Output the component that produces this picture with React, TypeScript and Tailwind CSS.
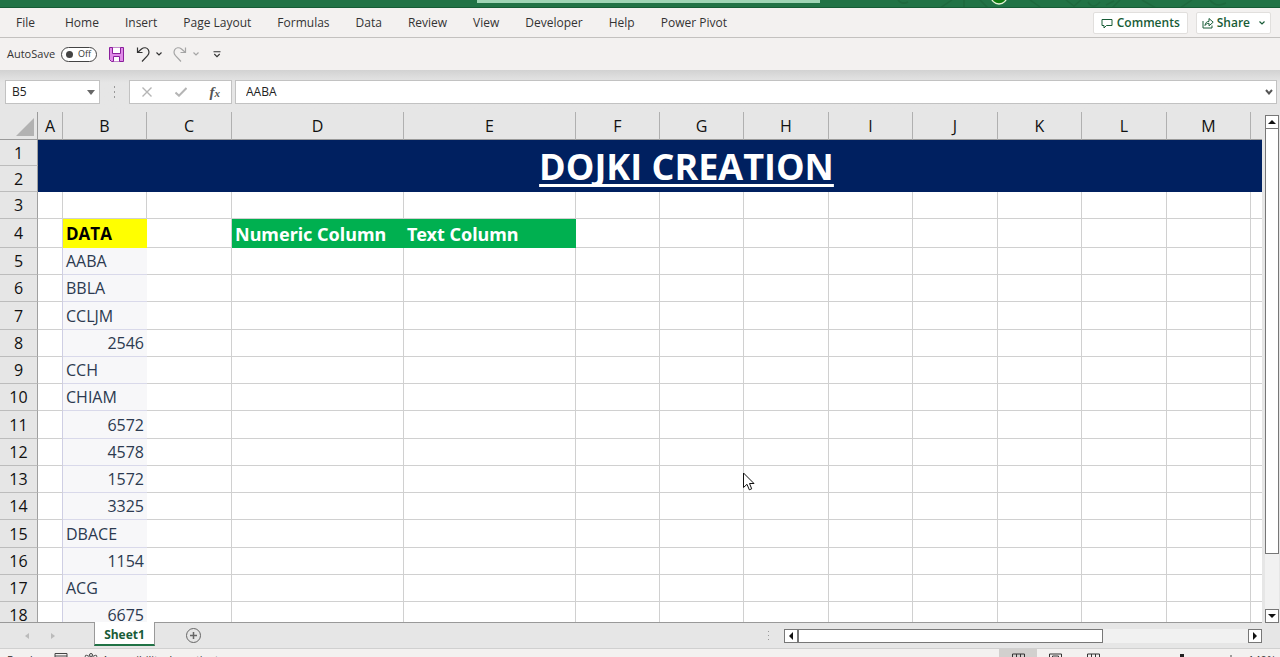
import { useState } from 'react'

interface Row {
  id: number
  height: string
  value?: string | number
}

const COLUMNS = [
  { id: 'A', width: 'w-[25px]' },
  { id: 'B', width: 'w-[84px]' },
  { id: 'C', width: 'w-[85px]' },
  { id: 'D', width: 'w-[172px]' },
  { id: 'E', width: 'w-[172px]' },
  { id: 'F', width: 'w-[84px]' },
  { id: 'G', width: 'w-[84px]' },
  { id: 'H', width: 'w-[85px]' },
  { id: 'I', width: 'w-[84px]' },
  { id: 'J', width: 'w-[85px]' },
  { id: 'K', width: 'w-[84px]' },
  { id: 'L', width: 'w-[85px]' },
  { id: 'M', width: 'w-[84px]' },
  { id: '', width: 'w-[84px]' },
]

const DATA_ROWS: Row[] = [
  { id: 5, height: 'h-[27px]', value: 'AABA' },
  { id: 6, height: 'h-[27px]', value: 'BBLA' },
  { id: 7, height: 'h-[28px]', value: 'CCLJM' },
  { id: 8, height: 'h-[27px]', value: 2546 },
  { id: 9, height: 'h-[27px]', value: 'CCH' },
  { id: 10, height: 'h-[27px]', value: 'CHIAM' },
  { id: 11, height: 'h-[28px]', value: 6572 },
  { id: 12, height: 'h-[27px]', value: 4578 },
  { id: 13, height: 'h-[27px]', value: 1572 },
  { id: 14, height: 'h-[27px]', value: 3325 },
  { id: 15, height: 'h-[28px]', value: 'DBACE' },
  { id: 16, height: 'h-[27px]', value: 1154 },
  { id: 17, height: 'h-[27px]', value: 'ACG' },
  { id: 18, height: 'h-[27px]', value: 6675 },
]

const MENU = [
  'Home',
  'Insert',
  'Page Layout',
  'Formulas',
  'Data',
  'Review',
  'View',
  'Developer',
  'Help',
  'Power Pivot',
]

function Chevron({ className }: { className: string }) {
  return (
    <svg viewBox="0 0 6 4" className={className} fill="none" stroke="currentColor" strokeWidth="1.2">
      <path d="M0.5 0.5 L3 3 L5.5 0.5" />
    </svg>
  )
}

function TitleBar() {
  return (
    <div className="relative flex h-2 shrink-0 justify-center overflow-hidden border-b border-[#155c35] bg-[#217346]">
      <div className="ml-4 h-[3px] w-[343px] bg-[#9fd5b5]" />
      <svg className="absolute right-0 top-0 h-2 w-[400px]" viewBox="0 0 400 8" fill="none">
        <g stroke="#1e693e" strokeWidth="1.5">
          <path d="M18 0 q4 5 10 2 M60 8 L72 0 M84 0 V8 M108 8 L100 0 M150 0 l10 7 M186 0 l8 6 l7 -6 M208 2 q5 8 12 0 M226 5 l8 -4 M240 0 l-8 8 M262 0 L276 8 M300 8 L312 0 M330 0 q6 8 16 3" />
        </g>
        <circle cx="119" cy="-4" r="8" fill="#107c10" stroke="#e8f5d8" strokeWidth="1.3" />
      </svg>
    </div>
  )
}

function MenuBar() {
  return (
    <div className="flex h-[30px] shrink-0 items-center border-b border-[#c3c1bf] bg-[#f3f1f0] pl-4 pr-[9px] pt-px text-[12px] text-[#333]">
      <nav className="flex gap-[26px]">
        <button className="mr-1">File</button>
        {MENU.map((item) => (
          <button key={item} className="whitespace-nowrap">
            {item}
          </button>
        ))}
      </nav>
      <div className="ml-auto flex gap-2 font-semibold text-[#185c37]">
        <button className="flex h-[22px] items-center gap-1 rounded-xs border border-[#e1dfdd] bg-white px-[7px]">
          <svg viewBox="0 0 12 11" className="h-[11px] w-3" fill="none" stroke="currentColor">
            <path d="M1 1.5 H11 V7.5 H5.5 L3 10 V7.5 H1 Z" />
          </svg>
          Comments
        </button>
        <button className="flex h-[22px] items-center gap-[3px] rounded-xs border border-[#e1dfdd] bg-white px-[5px]">
          <svg viewBox="0 0 12 12" className="size-3" fill="none" stroke="currentColor">
            <path d="M1 4 V11 H10 V8.5" />
            <path d="M3 8.5 C3.3 5.8 4.8 4.5 7 4.3 V1.5 L11.2 5.2 L7 8.8 V6.3 C5.2 6.3 4 7 3 8.5 Z" />
          </svg>
          Share
          <Chevron className="ml-1.5 h-1 w-1.5" />
        </button>
      </div>
    </div>
  )
}

function QuickAccess() {
  const [autoSave, setAutoSave] = useState(false)

  return (
    <div className="flex h-8 shrink-0 items-center bg-[#f3f1f0] pl-[7px] text-[11px] text-[#333]">
      <span id="autosave">AutoSave</span>
      <button
        role="switch"
        aria-checked={autoSave}
        aria-labelledby="autosave"
        onClick={() => setAutoSave(!autoSave)}
        className="ml-1.5 flex h-[15px] w-9 items-center justify-between rounded-full border border-[#444] bg-white pl-1 pr-[5px] text-[9px]"
      >
        <span className="size-[7px] rounded-full bg-[#444]" />
        {autoSave ? 'On' : 'Off'}
      </button>
      <button aria-label="Save" className="ml-3">
        <svg viewBox="0 0 15 15" className="size-[15px]" fill="none" stroke="#8a1f9c">
          <path d="M0.5 0.5 H14.5 V14.5 H2.5 L0.5 12.5 Z" fill="#e08be8" />
          <path d="M3.5 0.5 V6.5 H11.5 V0.5" fill="#fff" />
          <path d="M4.5 14.5 V9.5 H10.5 V14.5" fill="#fff" />
        </svg>
      </button>
      <button aria-label="Undo" className="ml-3 flex items-center gap-1.5">
        <svg viewBox="0 0 14 15" className="h-[15px] w-3.5" fill="none" stroke="#333" strokeWidth="1.2">
          <path d="M1.5 0.5 V5.5 H6.5" />
          <path d="M1.5 5.5 L5.5 2 C8 0 11 0.5 12.3 2.7 C13.5 5 13 7 11.5 8.7 L6 14.5" />
        </svg>
        <Chevron className="h-1 w-1.5" />
      </button>
      <button aria-label="Redo" className="ml-[11px] flex items-center gap-1.5 text-[#a5a5a5]">
        <svg viewBox="0 0 14 15" className="h-[15px] w-3.5" fill="none" stroke="currentColor" strokeWidth="1.2">
          <path d="M12.5 0.5 V5.5 H7.5" />
          <path d="M12.5 5.5 L8.5 2 C6 0 3 0.5 1.7 2.7 C0.5 5 1 7 2.5 8.7 L8 14.5" />
        </svg>
        <Chevron className="h-1 w-1.5" />
      </button>
      <button aria-label="Customize" className="ml-3.5">
        <svg viewBox="0 0 8 7" className="h-[7px] w-2" fill="none" stroke="#333" strokeWidth="1.1">
          <path d="M0.5 0.8 H7.5 M1.3 3 L4 5.7 L6.7 3" />
        </svg>
      </button>
    </div>
  )
}

function FormulaBar() {
  return (
    <div className="flex shrink-0 bg-linear-to-b from-[#d2d2d2] to-[#e6e6e6] to-30% pb-2 pl-[5px] pr-[3px] pt-2.5 text-[12px] text-[#222]">
      <div className="flex h-6 w-[95px] items-center border border-[#c2c2c2] bg-white pl-1.5 pr-1">
        <input aria-label="Name box" defaultValue="B5" className="w-full min-w-0 outline-none" />
        <svg viewBox="0 0 8 5" className="h-[5px] w-2 shrink-0" fill="#666">
          <path d="M0 0 H8 L4 5 Z" />
        </svg>
      </div>
      <svg viewBox="0 0 2 12" className="ml-3.5 mr-[13px] h-3 w-0.5 self-center" fill="#999">
        <path d="M0 0h1v2h-1z M0 5h1v2h-1z M0 10h1v2h-1z" />
      </svg>
      <div className="flex h-6 w-[103px] items-center justify-between border border-[#c2c2c2] bg-white pl-3 pr-[11px]">
        <button aria-label="Cancel">
          <svg viewBox="0 0 10 10" className="size-2.5" stroke="#b5b5b5" strokeWidth="1.4">
            <path d="M0.5 0.5 L9.5 9.5 M9.5 0.5 L0.5 9.5" />
          </svg>
        </button>
        <button aria-label="Enter">
          <svg viewBox="0 0 12 10" className="h-2.5 w-3" fill="none" stroke="#b5b5b5" strokeWidth="2">
            <path d="M0.5 5.5 L4 8.7 L11.5 1" />
          </svg>
        </button>
        <button aria-label="Insert function" className="font-['Liberation_Serif',serif] text-[15px] font-bold italic leading-4 text-[#555]">
          f<span className="text-[11px]">x</span>
        </button>
      </div>
      <div className="ml-[3px] flex h-6 flex-1 items-center border border-[#c2c2c2] bg-white pl-2.5 pr-[3px]">
        <input aria-label="Formula bar" defaultValue="AABA" className="min-w-0 flex-1 outline-none" />
        <button aria-label="Expand formula bar">
          <svg viewBox="0 0 8 6" className="h-1.5 w-2" fill="none" stroke="#555" strokeWidth="2">
            <path d="M1 1 L4 4.5 L7 1" />
          </svg>
        </button>
      </div>
    </div>
  )
}

const ROW_HEADER = 'border-b border-r border-b-[#bcbcbc] border-r-[#a0a0a0] bg-[#e6e6e6] p-0 font-normal leading-5 text-[#111]'
const CELL = 'border-b border-r border-[#d0d0d0] p-0'

function Sheet() {
  return (
    <table className="w-max table-fixed border-separate border-spacing-0 bg-white text-[16px]">
      <colgroup>
        <col className="w-[38px]" />
        {COLUMNS.map((col, i) => (
          <col key={i} className={col.width} />
        ))}
      </colgroup>
      <thead>
        <tr className="h-7">
          <td className="border-b border-r border-[#9a9a9a] bg-[#e6e6e6] p-0 align-bottom">
            <svg viewBox="0 0 18 18" className="mb-[3px] ml-auto mr-[3px] block size-[18px]" fill="#b2b2b2">
              <path d="M18 0 V18 H0 Z" />
            </svg>
          </td>
          {COLUMNS.map((col, i) => (
            <th
              key={i}
              scope="col"
              className="border-b border-r border-b-[#9a9a9a] border-r-[#b0b0b0] bg-[#e6e6e6] p-0 font-normal leading-6 text-[#111]"
            >
              {col.id}
            </th>
          ))}
        </tr>
      </thead>
      <tbody>
        <tr className="h-[26px]">
          <th scope="row" className={ROW_HEADER}>1</th>
          <td
            colSpan={14}
            rowSpan={2}
            className="bg-[#002060] p-0 pt-0.5 text-center text-[36px] font-bold leading-[50px] text-white underline decoration-[3px] underline-offset-4 [text-decoration-skip-ink:none]"
          >
            DOJKI CREATION
          </td>
        </tr>
        <tr className="h-[26px]">
          <th scope="row" className={ROW_HEADER}>2</th>
        </tr>
        <tr className="h-[27px]">
          <th scope="row" className={ROW_HEADER}>3</th>
          {COLUMNS.map((col, i) => (
            <td key={i} className={CELL} />
          ))}
        </tr>
        <tr className="h-[29px] text-left text-[18px] font-bold leading-6">
          <th scope="row" className={`${ROW_HEADER} text-center text-[16px]`}>4</th>
          <td className={CELL} />
          <td className="bg-[#ffff00] p-0 pl-[3px] text-[17px] text-black">DATA</td>
          <td className={CELL} />
          <td className="whitespace-nowrap bg-[#00b050] p-0 pl-[3px] font-['Noto_Sans',sans-serif] text-white">Numeric Column</td>
          <td className="whitespace-nowrap bg-[#00b050] p-0 pl-[3px] font-['Noto_Sans',sans-serif] text-white">Text Column</td>
          {COLUMNS.slice(5).map((col, i) => (
            <td key={i} className={CELL} />
          ))}
        </tr>
        {DATA_ROWS.map((row) => (
          <tr key={row.id} className={row.height}>
            <th scope="row" className={ROW_HEADER}>{row.id}</th>
            <td className="border-b border-r border-b-[#d0d0d0] border-r-[#cfcfe4] p-0" />
            <td
              className={`border-b border-[#d9d9ea] bg-[#f7f7f9] px-[3px] py-0 leading-5 text-[#2c3a50] ${
                typeof row.value === 'number' ? 'text-right' : 'text-left'
              }`}
            >
              {row.value}
            </td>
            {COLUMNS.slice(2).map((col, i) => (
              <td key={i} className={CELL} />
            ))}
          </tr>
        ))}
      </tbody>
    </table>
  )
}

function ScrollButton({ label, path }: { label: string; path: string }) {
  return (
    <button aria-label={label} className="flex size-3.5 shrink-0 items-center justify-center border border-[#777] bg-white">
      <svg viewBox="0 0 8 8" className="size-2" fill="#111">
        <path d={path} />
      </svg>
    </button>
  )
}

function SheetTabs() {
  return (
    <div className="flex h-[26px] shrink-0 border-b border-[#d0d0d0] bg-[#e6e6e6]">
      <div className="flex w-[94px] items-center gap-[22px] pl-[25px] text-[#bbb]">
        <button aria-label="Previous sheet">
          <svg viewBox="0 0 4 6" className="h-1.5 w-1" fill="currentColor">
            <path d="M4 0 V6 L0 3 Z" />
          </svg>
        </button>
        <button aria-label="Next sheet">
          <svg viewBox="0 0 4 6" className="h-1.5 w-1" fill="currentColor">
            <path d="M0 0 V6 L4 3 Z" />
          </svg>
        </button>
      </div>
      <button className="-mt-px h-6 w-[61px] border-x border-b-2 border-x-[#999] border-b-[#217346] bg-white pt-[3px] text-[12px] font-bold leading-4 text-[#185c37]">
        Sheet1
      </button>
      <button aria-label="New sheet" className="ml-[31px]">
        <svg viewBox="0 0 15 15" className="size-[15px]" fill="none" stroke="#666">
          <circle cx="7.5" cy="7.5" r="7" />
          <path d="M7.5 4 V11 M4 7.5 H11" strokeWidth="1.5" />
        </svg>
      </button>
      <div className="ml-auto mr-[18px] flex w-[494px] items-center gap-3.5">
        <svg viewBox="0 0 2 10" className="h-2.5 w-0.5" fill="#999">
          <path d="M0 0h1v1h-1z M0 4h1v1h-1z M0 8h1v1h-1z" />
        </svg>
        <div className="flex flex-1 bg-[#f1f1f1]">
          <ScrollButton label="Scroll left" path="M6 0 V8 L2 4 Z" />
          <div className="h-3.5 w-[305px] border border-[#777] bg-white" />
          <div className="flex-1" />
          <ScrollButton label="Scroll right" path="M2 0 V8 L6 4 Z" />
        </div>
      </div>
    </div>
  )
}

function StatusBar() {
  return (
    <div className="h-2 shrink-0 overflow-hidden bg-[#f3f1f0] text-[11px] text-[#333]">
      <div className="flex h-[22px] items-center pl-[7px] pr-1">
        <span className="w-[47px]">Ready</span>
        <svg viewBox="0 0 14 14" className="size-3.5" fill="none" stroke="#444">
          <path d="M1 0.5 H13 V12 H1 Z M1 3 H13" />
        </svg>
        <svg viewBox="0 0 14 14" className="ml-4 size-3.5" fill="none" stroke="#444">
          <circle cx="7" cy="2" r="1.5" />
          <path d="M5.5 3.5 L2.5 2.3 C1 2 0.5 3.7 1.8 4.3 L4.5 5.5 V8 L3 13 M8.5 3.5 L11.5 2.3 C13 2 13.5 3.7 12.2 4.3 L9.5 5.5 V8 L11 13" />
        </svg>
        <span className="ml-1 flex-1">Accessibility: Investigate</span>
        <div className="flex h-full w-[38px] items-center justify-center bg-[#d2d0ce]">
          <svg viewBox="0 0 13 13" className="h-[14px] w-[13px]" fill="none" stroke="#333">
            <path d="M0.5 0.5 H12.5 V12.5 H0.5 Z M0.5 4.5 H12.5 M0.5 8.5 H12.5 M4.5 0.5 V12.5 M8.5 0.5 V12.5" />
          </svg>
        </div>
        <svg viewBox="0 0 13 13" className="ml-3 h-[14px] w-[13px]" fill="none" stroke="#333">
          <path d="M0.5 12.5 V0.5 H12.5 V12.5 M3.5 12.5 V2.5 H9.5 V12.5 M5 4.5 H8" />
        </svg>
        <svg viewBox="0 0 13 13" className="ml-[25px] h-[14px] w-[13px]" fill="none" stroke="#333">
          <path d="M0.5 12.5 V0.5 H12.5 V12.5 M4.5 0.5 V8.5 M8.5 0.5 V8.5" />
        </svg>
        <span className="ml-20 h-3 w-1 bg-[#222]" />
        <svg viewBox="0 0 10 10" className="ml-[42px] size-2.5" stroke="#444">
          <path d="M5 0 V10 M0 5 H10" />
        </svg>
        <span className="ml-3">140%</span>
      </div>
    </div>
  )
}

export default function App() {
  return (
    <div className="relative flex h-screen flex-col overflow-hidden bg-[#e6e6e6] font-['Open_Sans','Noto_Sans',sans-serif]">
      <TitleBar />
      <MenuBar />
      <QuickAccess />
      <FormulaBar />
      <div className="flex min-h-0 flex-1">
        <div className="min-w-0 flex-1 overflow-hidden border-b border-[#999]">
          <Sheet />
        </div>
        {/* vertical scrollbar */}
        <div className="ml-[3px] mr-px mt-[3px] flex w-3.5 shrink-0 flex-col bg-[#f1f1f1]">
          <ScrollButton label="Scroll up" path="M0 6 H8 L4 2 Z" />
          <div className="-mt-px h-[426px] border border-[#777] bg-white" />
          <div className="flex-1" />
          <ScrollButton label="Scroll down" path="M0 2 H8 L4 6 Z" />
        </div>
      </div>
      <SheetTabs />
      <StatusBar />

      {/* mouse pointer */}
      <svg viewBox="0 0 12 19" className="absolute left-[743px] top-[472px] h-[19px] w-3" fill="#fff" stroke="#111">
        <path d="M0.5 1 V15.5 L4 12.3 L6.3 17.8 L8.7 16.8 L6.5 11.5 H11 Z" />
      </svg>
    </div>
  )
}
